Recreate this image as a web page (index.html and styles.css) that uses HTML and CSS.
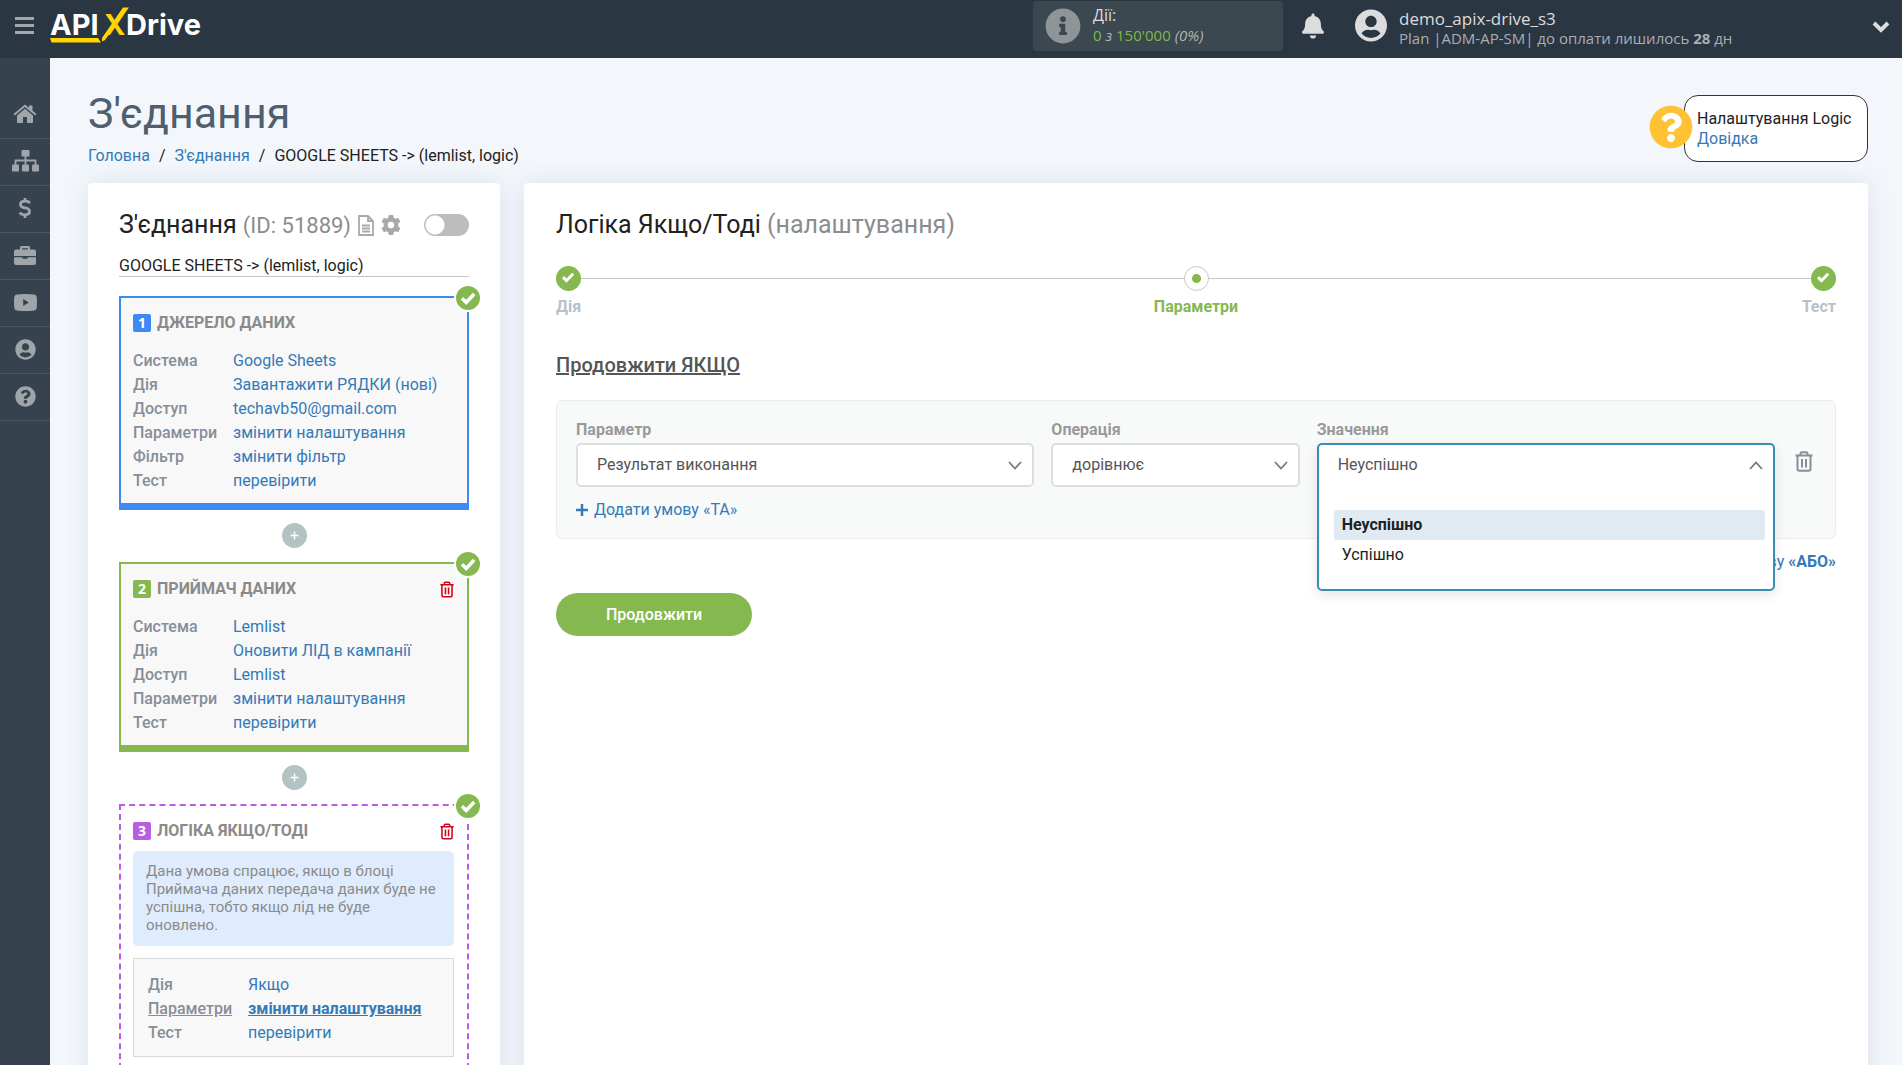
FILE: index.html
```html
<!doctype html>
<html lang="uk">
<head>
<meta charset="utf-8">
<title>З'єднання</title>
<link rel="stylesheet" href="styles.css">
</head>

<body>
<!-- icons -->
<svg class="sprite" width="0" height="0">
	<symbol id="i-check" viewBox="0 0 24 24"><path d="M6 12.200l4.200 4.200L18.200 8" fill="none" stroke="currentColor" stroke-width="3.600"/></symbol>
	<symbol id="i-trash" viewBox="0 0 18 21"><path d="M0.5 4.5h17M5.5 4V2.6Q5.5 1.2 7 1.2h4Q12.500 1.200 12.500 2.600V4M2.500 4.500v13.500q0 1.800 1.800 1.800h9.400q1.800 0 1.800-1.800V4.500M7 8v8.500M11 8v8.500" fill="none" stroke="currentColor" stroke-width="2"/></symbol>
	<symbol id="i-user" viewBox="0 0 496 512"><path fill="currentColor" d="M248 8C111 8 0 119 0 256s111 248 248 248 248-111 248-248S385 8 248 8zm0 96c48.600 0 88 39.400 88 88s-39.400 88-88 88-88-39.400-88-88 39.400-88 88-88zm0 344c-58.700 0-111.300-26.600-146.500-68.200 18.800-35.400 55.600-59.800 98.500-59.800 2.400 0 4.800.4 7.100 1.100 13 4.200 26.600 6.900 40.900 6.900 14.300 0 28-2.700 40.900-6.900 2.300-.7 4.700-1.100 7.100-1.100 42.900 0 79.700 24.400 98.500 59.800C359.300 421.400 306.700 448 248 448z"/></symbol>
	<symbol id="i-question" viewBox="0 0 512 512"><path fill="currentColor" d="M504 256c0 136.997-111.043 248-248 248S8 392.997 8 256C8 119.083 119.043 8 256 8s248 111.083 248 248zM262.655 90c-54.497 0-89.255 22.957-116.549 63.758-3.536 5.286-2.353 12.415 2.715 16.258l34.699 26.310c5.205 3.947 12.621 3.008 16.665-2.122 17.864-22.658 30.113-35.797 57.303-35.797 20.429 0 45.698 13.148 45.698 32.958 0 14.976-12.363 22.667-32.534 33.976C247.128 238.528 216 254.941 216 296v4c0 6.627 5.373 12 12 12h56c6.627 0 12-5.373 12-12v-1.333c0-28.462 83.186-29.647 83.186-106.667 0-58.002-60.165-102-116.531-102zM256 338c-25.365 0-46 20.635-46 46 0 25.364 20.635 46 46 46s46-20.636 46-46c0-25.365-20.635-46-46-46z"/></symbol>
</svg>

<header class="top">
	<button class="burger" aria-label="Меню"><svg width="19" height="17" viewBox="0 0 19 17"><path d="M0 1.500h19M0 8.500h19M0 15.500h19" stroke="currentColor" stroke-width="3"/></svg></button>
	<a href="#" class="logo" aria-label="ApiXDrive">
		<svg width="158" height="46" viewBox="0 0 158 46">
			<g class="logo-text">
				<text x="1" y="35" fill="#fff">API</text>
				<text x="55" y="35" fill="#ffd600">X</text>
				<text x="77" y="35" fill="#fff">Drive</text>
			</g>
			<path d="M53 41.500V38L74 7.500h6L56 40z" fill="#ffd600"/>
			<path d="M1 38h48l3 4.500H2.500z" fill="#ffd600"/>
		</svg>
	</a>
	<div class="usage">
		<svg width="36" height="36" viewBox="0 0 512 512"><path fill="currentColor" d="M256 8C119.043 8 8 119.083 8 256c0 136.997 111.043 248 248 248s248-111.003 248-248C504 119.083 392.957 8 256 8zm0 110c23.196 0 42 18.804 42 42s-18.804 42-42 42-42-18.804-42-42 18.804-42 42-42zm56 254c0 6.627-5.373 12-12 12h-88c-6.627 0-12-5.373-12-12v-24c0-6.627 5.373-12 12-12h12v-64h-12c-6.627 0-12-5.373-12-12v-24c0-6.627 5.373-12 12-12h64c6.627 0 12 5.373 12 12v100h12c6.627 0 12 5.373 12 12v24z"/></svg>
		<div>
			<div class="usage-name">Дії:</div>
			<div class="usage-count"><span>0</span> <i>з</i> <span>150'000</span> <i>(0%)</i></div>
		</div>
	</div>
	<button class="bell" aria-label="Сповіщення"><svg width="22" height="26" viewBox="0 0 448 512"><path fill="currentColor" d="M224 512c35.320 0 63.970-28.650 63.970-64H160.030c0 35.350 28.650 64 63.970 64zm215.390-149.710c-19.320-20.760-55.470-51.990-55.470-154.290 0-77.700-54.480-139.900-127.940-155.160V32c0-17.670-14.320-32-31.980-32s-31.980 14.330-31.980 32v20.840C118.560 68.100 64.080 130.300 64.080 208c0 102.300-36.150 133.530-55.470 154.290-6 6.450-8.660 14.160-8.610 21.710.11 16.400 12.980 32 32.100 32h383.800c19.120 0 32-15.600 32.100-32 .05-7.550-2.610-15.270-8.610-21.710z"/></svg></button>
	<div class="account">
		<svg width="32" height="33"><use href="#i-user"/></svg>
		<div>
			<div class="account-name">demo_apix-drive_s3</div>
			<div class="account-plan">Plan |ADM-AP-SM| до оплати лишилось <b>28</b> дн</div>
		</div>
	</div>
	<button class="more" aria-label="Профіль"><svg width="18" height="12" viewBox="0 0 18 12"><path d="M2 2l7 7 7-7" fill="none" stroke="currentColor" stroke-width="4"/></svg></button>
</header>

<div class="layout">
	<nav class="side">
		<a href="#" aria-label="Головна"><svg width="24" height="20" viewBox="0 0 24 20"><path fill="currentColor" d="M12 4.800L4 11.500V18q0 1 1 1h5v-6h4v6h5q1 0 1-1v-6.500zM0.500 10L12 0.500 16 3.800V1.500h3.500v5.200L23.500 10l-1.300 1.500L12 3 1.800 11.500z"/></svg></a>
		<a href="#" aria-label="З'єднання"><svg width="27" height="22" viewBox="0 0 27 22"><g fill="currentColor"><rect x="9.500" width="8" height="6.500" rx="1"/><rect y="14.500" width="7" height="7" rx="1"/><rect x="10" y="14.500" width="7" height="7" rx="1"/><rect x="20" y="14.500" width="7" height="7" rx="1"/></g><path d="M13.500 6v9M3.500 15v-4.500h20V15" fill="none" stroke="currentColor" stroke-width="1.800"/></svg></a>
		<a href="#" aria-label="Оплата"><svg width="14" height="22" viewBox="0 0 14 22"><path d="M12 6Q10.500 4.200 7 4.200 2.500 4.200 2.500 7.200T7 10.800t4.500 3.800T7 17.800Q3.500 17.800 1.500 15.800M7 1v4M7 17v4" fill="none" stroke="currentColor" stroke-width="2.800"/></svg></a>
		<a href="#" aria-label="Проекти"><svg width="22" height="19" viewBox="0 0 22 19"><path fill="currentColor" fill-rule="evenodd" d="M6 3.500V1.500Q6 0 7.500 0h7Q16 0 16 1.500v2h4q2 0 2 2V10H0V5.500q0-2 2-2zM8.200 3.500h5.600V2.200H8.200zM0 11.200h8.500v1.500h5v-1.500H22V17q0 2-2 2H2q-2 0-2-2z"/></svg></a>
		<a href="#" aria-label="Відео"><svg width="23" height="17" viewBox="0 0 23 17"><path fill="currentColor" fill-rule="evenodd" d="M3 .5q8.500-1 17 0 2.500.3 2.700 2.500.6 5.500 0 11-.2 2.200-2.700 2.500-8.500 1-17 0-2.500-.3-2.700-2.500-.6-5.500 0-11Q.5.800 3 .5zM9.200 5v7l5.600-3.500z"/></svg></a>
		<a href="#" aria-label="Профіль"><svg width="21" height="21"><use href="#i-user"/></svg></a>
		<a href="#" aria-label="Довідка"><svg width="21" height="21"><use href="#i-question"/></svg></a>
	</nav>

	<main class="page">
		<div class="page-head">
			<div>
				<h1>З'єднання</h1>
				<div class="crumbs"><a href="#">Головна</a><span>/</span><a href="#">З'єднання</a><span>/</span>GOOGLE SHEETS -&gt; (lemlist, logic)</div>
			</div>
			<div class="help">
				<svg class="help-icon" width="44" height="44"><circle cx="22" cy="22" r="19" fill="#fff"/><use href="#i-question"/></svg>
				<div>Налаштування Logic</div>
				<a href="#">Довідка</a>
			</div>
		</div>

		<div class="cols">
			<section class="card flow">
				<div class="flow-head">
					<h2>З'єднання <span>(ID: 51889)</span></h2>
					<svg width="16" height="21" viewBox="0 0 16 21"><path d="M1 1h9l5 5v14H1zM10 1v5h5M4 10.500h8M4 13.500h8M4 16.500h8" fill="none" stroke="currentColor" stroke-width="1.800"/></svg>
					<svg class="gear" width="20" height="20" viewBox="0 0 20 20"><path fill="currentColor" fill-rule="evenodd" d="M7.800 0h4.400l.6 2.800 1.700 1 2.700-1 2.200 3.900-2.100 1.800v3l2.100 1.800-2.200 3.900-2.700-1-1.700 1-.6 2.800H7.800l-.6-2.800-1.700-1-2.700 1-2.200-3.900 2.100-1.800v-3L.6 6.700l2.200-3.900 2.700 1 1.700-1zM10 6.800a3.200 3.200 0 1 0 0 6.400 3.200 3.200 0 0 0 0-6.400z"/></svg>
					<input type="checkbox" class="switch" aria-label="Увімкнути">
				</div>
				<input type="text" class="flow-name" aria-label="Назва" value="GOOGLE SHEETS -&gt; (lemlist, logic)">

				<div class="block blue">
					<span class="done"><svg width="24" height="24"><use href="#i-check"/></svg></span>
					<h3><span class="num">1</span>ДЖЕРЕЛО ДАНИХ</h3>
					<dl>
						<dt>Система</dt><dd><a href="#">Google Sheets</a></dd>
						<dt>Дія</dt><dd><a href="#">Завантажити РЯДКИ (нові)</a></dd>
						<dt>Доступ</dt><dd><a href="#">techavb50@gmail.com</a></dd>
						<dt>Параметри</dt><dd><a href="#">змінити налаштування</a></dd>
						<dt>Фільтр</dt><dd><a href="#">змінити фільтр</a></dd>
						<dt>Тест</dt><dd><a href="#">перевірити</a></dd>
					</dl>
				</div>
				<button class="plus" aria-label="Додати"><svg width="9" height="9" viewBox="0 0 9 9"><path d="M4.500 .5v8M.5 4.500h8" stroke="#fff" stroke-width="1.500"/></svg></button>

				<div class="block green">
					<span class="done"><svg width="24" height="24"><use href="#i-check"/></svg></span>
					<h3><span class="num">2</span>ПРИЙМАЧ ДАНИХ <button class="del" aria-label="Видалити"><svg width="14" height="17"><use href="#i-trash"/></svg></button></h3>
					<dl>
						<dt>Система</dt><dd><a href="#">Lemlist</a></dd>
						<dt>Дія</dt><dd><a href="#">Оновити ЛІД в кампанії</a></dd>
						<dt>Доступ</dt><dd><a href="#">Lemlist</a></dd>
						<dt>Параметри</dt><dd><a href="#">змінити налаштування</a></dd>
						<dt>Тест</dt><dd><a href="#">перевірити</a></dd>
					</dl>
				</div>
				<button class="plus" aria-label="Додати"><svg width="9" height="9" viewBox="0 0 9 9"><path d="M4.500 .5v8M.5 4.500h8" stroke="#fff" stroke-width="1.500"/></svg></button>

				<div class="block logic">
					<span class="done"><svg width="24" height="24"><use href="#i-check"/></svg></span>
					<h3><span class="num">3</span>ЛОГІКА ЯКЩО/ТОДІ <button class="del" aria-label="Видалити"><svg width="14" height="17"><use href="#i-trash"/></svg></button></h3>
					<p class="note">Дана умова спрацює, якщо в блоці Приймача даних передача даних буде не успішна, тобто якщо лід не буде оновлено.</p>
					<dl class="inner">
						<dt>Дія</dt><dd><a href="#">Якщо</a></dd>
						<dt class="cur">Параметри</dt><dd class="cur"><a href="#">змінити налаштування</a></dd>
						<dt>Тест</dt><dd><a href="#">перевірити</a></dd>
					</dl>
				</div>
			</section>

			<section class="card setup">
				<h2>Логіка Якщо/Тоді <span>(налаштування)</span></h2>
				<ol class="steps">
					<li><span class="dot"><svg width="20" height="20"><use href="#i-check"/></svg></span>Дія</li>
					<li class="now"><span class="dot"></span>Параметри</li>
					<li><span class="dot"><svg width="20" height="20"><use href="#i-check"/></svg></span>Тест</li>
				</ol>

				<h4>Продовжити ЯКЩО</h4>
				<div class="cond">
					<div class="fields">
						<div class="field">
							<label for="param">Параметр</label>
							<div class="select">
								<select id="param"><option>Результат виконання</option></select>
								<svg width="14" height="9" viewBox="0 0 14 9"><path d="M1 1l6 6.500L13 1" fill="none" stroke="currentColor" stroke-width="1.800"/></svg>
							</div>
						</div>
						<div class="field">
							<label for="oper">Операція</label>
							<div class="select">
								<select id="oper"><option>дорівнює</option></select>
								<svg width="14" height="9" viewBox="0 0 14 9"><path d="M1 1l6 6.500L13 1" fill="none" stroke="currentColor" stroke-width="1.800"/></svg>
							</div>
						</div>
						<div class="field">
							<label for="val">Значення</label>
							<div class="select open">
								<div class="drop">
									<div class="opt sel">Неуспішно</div>
									<div class="opt">Успішно</div>
								</div>
								<select id="val"><option>Неуспішно</option><option>Успішно</option></select>
								<svg width="14" height="9" viewBox="0 0 14 9"><path d="M1 8l6-6.500L13 8" fill="none" stroke="currentColor" stroke-width="1.800"/></svg>
							</div>
						</div>
						<button class="remove" aria-label="Видалити умову"><svg width="18" height="21"><use href="#i-trash"/></svg></button>
					</div>
					<a href="#" class="add"><svg width="12" height="12" viewBox="0 0 12 12"><path d="M6 0v12M0 6h12" stroke="currentColor" stroke-width="2.500"/></svg>Додати умову «ТА»</a>
				</div>
				<div class="or"><a href="#">Додати умову <b>«АБО»</b></a></div>
				<button class="go">Продовжити</button>
			</section>
		</div>
	</main>
</div>
</body>
</html>
```

FILE: styles.css
```css
*{
	box-sizing:border-box;
}
body{
	margin:0;
	height:100vh;
	overflow:hidden;
	display:flex;
	flex-direction:column;
	font:16px/20px Roboto,"Liberation Sans",sans-serif;
	color:#212121;
	background:#f3f7fc;
}
h1,h2,h3,h4,p,dl,dd,ol{
	margin:0;
	padding:0;
}
a{
	color:#337ab7;
	text-decoration:none;
}
button{
	border:0;
	padding:0;
	background:none;
	font:inherit;
	color:inherit;
	cursor:pointer;
}
svg{
	display:block;
	flex:none;
}
.sprite{
	position:absolute;
}

/* header */
.top{
	flex:none;
	height:58px;
	padding:0 12px 0 15px;
	display:flex;
	background:#2b3643;
	color:#dcdcdc;
	font-family:"Open Sans","Noto Sans",sans-serif;
}
.burger{
	height:50px;
	margin-right:15px;
	color:#a3a7ab;
}
.logo{
	margin-right:auto;
}
.logo-text{
	font:bold 29px Inter,"Open Sans",sans-serif;
}
.usage{
	width:250px;
	height:50px;
	margin-top:1px;
	padding:0 12px;
	display:flex;
	align-items:center;
	gap:12px;
	border-radius:4px;
	background:#3b4850;
}
.usage svg{
	color:#8f9496;
}
.usage-name{
	line-height:20px;
}
.usage-count{
	font-size:15px;
	line-height:20px;
	padding-bottom:2px;
	color:#b0b4b7;
}
.usage-count span{
	color:#7fb84a;
}
.bell{
	height:52px;
	margin:0 31px 0 19px;
}
.account{
	width:517px;
	display:flex;
	gap:12px;
	padding-top:9px;
}
.account-name{
	font-size:17px;
	line-height:20px;
}
.account-plan{
	font-size:15px;
	line-height:18px;
	color:#a9aeb3;
}
.more{
	height:54px;
}

/* left menu */
.layout{
	flex:1;
	min-height:0;
	display:flex;
}
.side{
	width:50px;
	flex:none;
	padding-top:34px;
	background:#37424f;
}
.side a{
	height:47px;
	padding-bottom:2px;
	display:flex;
	align-items:center;
	justify-content:center;
	border-bottom:1px solid #4b5663;
	color:#a0a5aa;
}

.page{
	flex:1;
	min-width:0;
	padding:34px 34px 0 38px;
}
.page-head{
	display:flex;
	justify-content:space-between;
	height:91px;
}
h1{
	font-size:43px;
	line-height:43px;
	font-weight:400;
	color:#4f5f6f;
}
.crumbs{
	margin-top:11px;
	line-height:20px;
}
.crumbs span{
	margin:0 9px;
}
.help{
	position:relative;
	width:184px;
	height:67px;
	margin-top:3px;
	padding:13px 12px;
	border:1px solid #333;
	border-radius:14px;
	background:#fff;
	white-space:nowrap;
}
.help-icon{
	position:absolute;
	left:-36px;
	top:9px;
	color:#ffc233;
}
.cols{
	display:flex;
	align-items:flex-start;
	gap:24px;
}
.card{
	min-height:1000px;
	padding:30px 32px;
	border-radius:4px;
	background:#fff;
	box-shadow:0 0 24px rgba(60,80,110,.12);
}
h2{
	font-size:25px;
	line-height:24px;
	font-weight:400;
	white-space:nowrap;
}
h2 span{
	color:#8c8c8c;
}

/* connection */
.flow{
	width:412px;
	flex:none;
	padding:30px 31px;
}
.flow-head{
	display:flex;
	align-items:center;
	height:24px;
	color:#a9a9a9;
	gap:7px;
}
.flow-head h2{
	color:#212121;
}
.flow-head h2 span{
	font-size:22px;
}
.switch{
	appearance:none;
	width:45px;
	height:22px;
	margin:0 0 0 auto;
	border-radius:11px;
	background:radial-gradient(circle at 11px 11px,#fff 9px,#bdbdbd 10px);
}
.flow-name{
	display:block;
	width:100%;
	height:24px;
	margin:16px 0 19px;
	padding:2px 0 0;
	border:0;
	border-bottom:1px solid #c4c4c4;
	font:inherit;
	color:inherit;
}
.block{
	position:relative;
	padding:13px 13px 10px 12px;
	border:2px solid;
	border-bottom-width:7px;
	background:#f8f8f8;
}
.blue{
	border-color:#3d8af7;
}
.green{
	border-color:#85b84f;
}
.logic{
	border:2px dashed #b95ee0;
	background:#fff;
	padding-bottom:40px;
}
.done{
	position:absolute;
	right:-15px;
	top:-14px;
	border:2px solid #fff;
	border-radius:50%;
	background:#85b84f;
	color:#fff;
}
h3{
	display:flex;
	align-items:center;
	height:24px;
	font-size:16px;
	font-weight:700;
	color:#8a8a8a;
	margin-bottom:14px;
}
.num{
	width:18px;
	height:18px;
	margin-right:6px;
	border-radius:2px;
	background:#3d8af7;
	color:#fff;
	font:bold 14px/18px "Open Sans",sans-serif;
	text-align:center;
}
.green .num{
	background:#85b84f;
}
.logic .num{
	background:#b95ee0;
}
.del{
	margin-left:auto;
	color:#d0021b;
}
dl{
	display:grid;
	grid-template-columns:100px 1fr;
	line-height:24px;
	white-space:nowrap;
}
dt{
	font-weight:500;
	color:#868e99;
}
.cur{
	text-decoration:underline;
}
.cur a{
	font-weight:700;
	text-decoration:underline;
}
.plus{
	display:flex;
	align-items:center;
	justify-content:center;
	width:25px;
	height:25px;
	margin:13px auto 14px;
	border-radius:50%;
	background:#b3c2c2;
}
.logic h3{
	margin-bottom:8px;
}
.note{
	padding:11px 13px 12px;
	border-radius:5px;
	background:#dfecfd;
	color:#8a8a8a;
	font-size:15px;
	line-height:18px;
}
.inner{
	margin-top:12px;
	padding:14px 14px 11px;
	border:1px solid #d9d9d9;
	background:#f8f8f8;
}

/* settings */
.setup{
	flex:1;
	min-width:0;
}
.steps{
	display:flex;
	justify-content:space-between;
	margin-top:29px;
	list-style:none;
	font-weight:700;
	color:#b9bfc8;
	background:linear-gradient(#c8c8c8,#c8c8c8) 0 12px/100% 1px no-repeat;
}
.steps li{
	flex:1;
	display:flex;
	flex-direction:column;
	align-items:flex-start;
	gap:6px;
}
.steps .now{
	align-items:center;
	color:#85b84f;
}
.steps li:last-child{
	align-items:flex-end;
}
.dot{
	width:25px;
	height:25px;
	padding:1px 2px;
	border-radius:50%;
	background:#85b84f;
	color:#fff;
}
.now .dot{
	border:1px solid #c8c8c8;
	background:radial-gradient(circle,#85b84f 4px,#fff 5px);
}
h4{
	margin:36px 0 23px;
	font-size:20px;
	line-height:24px;
	font-weight:500;
	color:#555;
	text-decoration:underline;
}
.cond{
	padding:19px;
	height:139px;
	border:1px solid #ebeeed;
	border-radius:6px;
	background:#f8faf9;
}
.fields{
	display:grid;
	grid-template-columns:24fr 13fr 24fr 24px;
	gap:17px;
}
.field label{
	display:block;
	margin-bottom:3px;
	font-weight:700;
	color:#999;
}
.select{
	position:relative;
}
.select select{
	appearance:none;
	display:block;
	position:relative;
	width:100%;
	height:44px;
	padding:0 19px;
	border:2px solid #dcdfde;
	border-radius:5px;
	background:#fff;
	font:inherit;
	color:#555;
}
.select svg{
	position:absolute;
	right:12px;
	top:18px;
	color:#777;
}
.select.open select{
	border-color:transparent;
	background:none;
}
.drop{
	position:absolute;
	left:0;
	right:0;
	top:0;
	padding:65px 8px 49px 15px;
	height:148px;
	border:2px solid #368db5;
	border-radius:5px;
	background:#fff;
	box-shadow:0 4px 12px rgba(0,0,0,.1);
}
.opt{
	padding:0 8px;
	line-height:30px;
	border-radius:2px;
}
.sel{
	font-weight:700;
	background:#e0eaf3;
}
.remove{
	align-self:start;
	justify-self:center;
	margin-top:31px;
	color:#868e99;
}
.add{
	display:inline-flex;
	align-items:center;
	gap:6px;
	margin-top:13px;
}
.or{
	margin-top:13px;
	text-align:right;
}
.go{
	display:block;
	margin-top:21px;
	padding:0 50px;
	height:43px;
	border-radius:22px;
	background:#85b84f;
	color:#fff;
	font-weight:500;
}
```
